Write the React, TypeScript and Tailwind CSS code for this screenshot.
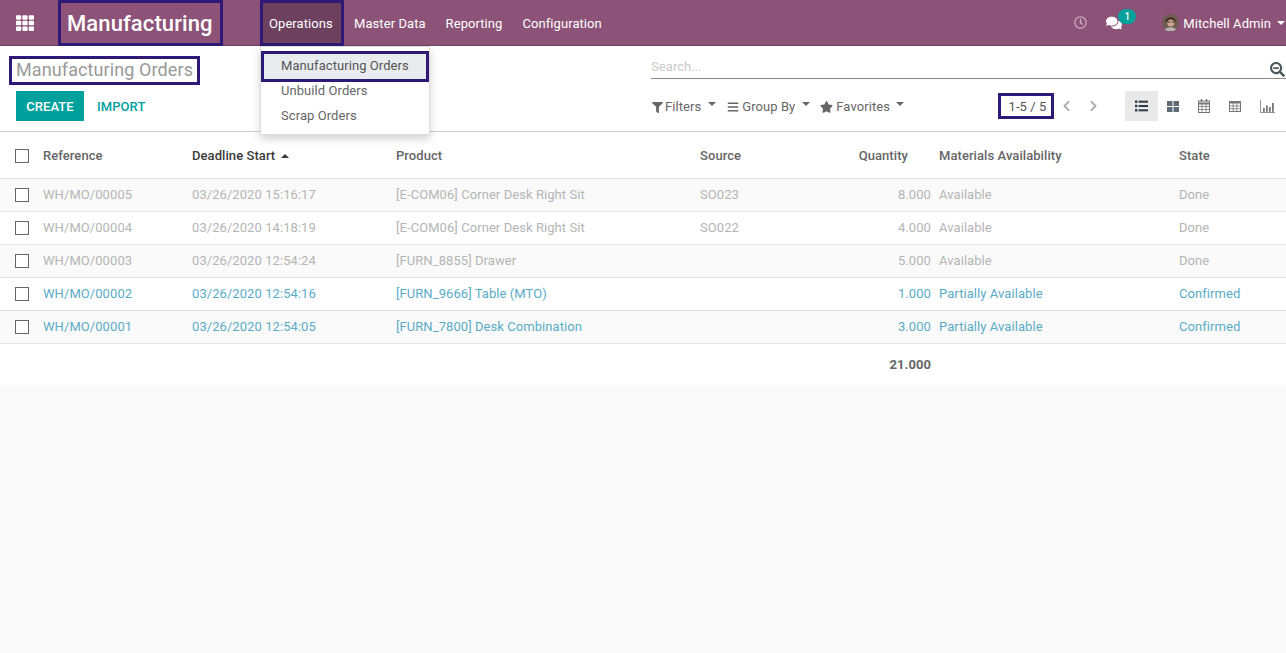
import React from 'react';
import { FaTh, FaFilter, FaBars, FaStar, FaComments, FaRegClock, FaSearchMinus, FaChevronLeft, FaChevronRight } from 'react-icons/fa';

const rowGrid = 'grid grid-cols-[43px_149px_204px_304px_239px_240px_1fr] items-center';

const orders = [
  { ref: 'WH/MO/00005', start: '03/26/2020 15:16:17', product: '[E-COM06] Corner Desk Right Sit', source: 'SO023', qty: '8.000', avail: 'Available', state: 'Done', done: true },
  { ref: 'WH/MO/00004', start: '03/26/2020 14:18:19', product: '[E-COM06] Corner Desk Right Sit', source: 'SO022', qty: '4.000', avail: 'Available', state: 'Done', done: true },
  { ref: 'WH/MO/00003', start: '03/26/2020 12:54:24', product: '[FURN_8855] Drawer', source: '', qty: '5.000', avail: 'Available', state: 'Done', done: true },
  { ref: 'WH/MO/00002', start: '03/26/2020 12:54:16', product: '[FURN_9666] Table (MTO)', source: '', qty: '1.000', avail: 'Partially Available', state: 'Confirmed', done: false },
  { ref: 'WH/MO/00001', start: '03/26/2020 12:54:05', product: '[FURN_7800] Desk Combination', source: '', qty: '3.000', avail: 'Partially Available', state: 'Confirmed', done: false },
];

function Checkbox() {
  return <span className="ml-[15px] block h-[14px] w-[14px] border border-[#666666] bg-white" />;
}

function Caret({ className = '' }: { className?: string }) {
  return <span className={`inline-block h-0 w-0 border-x-[4px] border-b-0 border-t-[4px] border-x-transparent border-t-current ${className}`} />;
}

function Avatar() {
  return (
    <svg viewBox="0 0 16 16" className="h-[17px] w-[17px]">
      <circle cx="8" cy="8" r="8" fill="#6f5b50" />
      <path d="M3 6 Q8 0 13 6 L12 8 Q8 4 4 8 Z" fill="#3d2e27" />
      <circle cx="8.3" cy="8.4" r="3.3" fill="#cfa78f" />
      <path d="M5.5 7.6h2.2M9 7.6h2.2" stroke="#3d2e27" strokeWidth="0.9" />
      <path d="M2.5 14 Q8 11 13.5 14 L11 16 L5 16 Z" fill="#b9b4ad" />
    </svg>
  );
}

function ListIcon() {
  return (
    <svg viewBox="0 0 13 12" className="h-[12px] w-[13px] text-[#2f3a44]" fill="currentColor">
      <rect x="0" y="0.5" width="2.4" height="2.4" />
      <rect x="0" y="4.8" width="2.4" height="2.4" />
      <rect x="0" y="9.1" width="2.4" height="2.4" />
      <rect x="3.6" y="0.7" width="9.4" height="2" />
      <rect x="3.6" y="5" width="9.4" height="2" />
      <rect x="3.6" y="9.3" width="9.4" height="2" />
    </svg>
  );
}

function KanbanIcon() {
  return (
    <svg viewBox="0 0 12 11" className="h-[11px] w-[12px] text-[#5f6b78]" fill="currentColor">
      <rect x="0" y="0" width="5.5" height="5" />
      <rect x="6.5" y="0" width="5.5" height="5" />
      <rect x="0" y="6" width="5.5" height="5" />
      <rect x="6.5" y="6" width="5.5" height="5" />
    </svg>
  );
}

function CalendarIcon() {
  return (
    <svg viewBox="0 0 12 14" className="h-[14px] w-[12px] text-[#777777]" fill="none" stroke="currentColor" strokeWidth="1">
      <rect x="0.5" y="2" width="11" height="11.5" />
      <path d="M0.5 4.5h11" strokeWidth="2" />
      <path d="M0.5 7.5h11M0.5 10.5h11M4 5v8.5M8 5v8.5" strokeWidth="0.8" />
      <path d="M3.5 0v3M8.5 0v3" strokeWidth="1.4" />
    </svg>
  );
}

function TableIcon() {
  return (
    <svg viewBox="0 0 12 11" className="h-[11px] w-[12px] text-[#777777]" fill="none" stroke="currentColor" strokeWidth="1">
      <rect x="0.5" y="0.5" width="11" height="10" />
      <path d="M0.5 1.5h11" strokeWidth="2" />
      <path d="M0.5 5h11M0.5 7.7h11M4.2 2v8.5M7.8 2v8.5" strokeWidth="0.8" />
    </svg>
  );
}

function GraphIcon() {
  return (
    <svg viewBox="0 0 15 13" className="h-[13px] w-[15px] text-[#777777]" fill="currentColor">
      <path d="M0.5 0v12.5H15" fill="none" stroke="currentColor" strokeWidth="0.8" />
      <rect x="3" y="8" width="1.8" height="3.8" />
      <rect x="6" y="5.5" width="1.8" height="6.3" />
      <rect x="9" y="7" width="1.8" height="4.8" />
      <rect x="12" y="3" width="1.8" height="8.8" />
    </svg>
  );
}

function NavBar() {
  return (
    <nav className="flex h-[46px] items-center border-b border-[#6f4560] bg-[#8c5277] text-[13px] text-white">
      <FaTh className="ml-4 h-[18px] w-[18px]" />
      <div className="ml-6 flex h-[46px] w-[165px] items-center border-[3px] border-[#2e1a76] pl-[6px] pt-[2px] text-[22px] font-medium tracking-[0.1px]">Manufacturing</div>
      <div className="ml-[37px] flex h-[46px] w-[84px] items-center border-[3px] border-[#2e1a76] bg-[#6d405d] pl-[6px] pt-[2px]">Operations</div>
      <span className="ml-[10px] pt-[2px]">Master Data</span>
      <span className="ml-[20px] pt-[2px]">Reporting</span>
      <span className="ml-[20px] pt-[2px]">Configuration</span>
      <div className="ml-auto flex items-center">
        <FaRegClock className="h-[13px] w-[13px] text-[#c9adc0]" />
        <div className="relative ml-[19px] mr-[40px]">
          <FaComments className="h-[16px] w-[16px]" />
          <span className="absolute left-[12px] top-[-6px] flex h-[15px] w-[18px] items-center justify-center rounded-full bg-[#00a09d] text-[10px] font-medium">1</span>
        </div>
        <Avatar />
        <span className="ml-[4px] pt-[2px]">Mitchell Admin</span>
        <Caret className="ml-[6px] mr-[1px]" />
      </div>
    </nav>
  );
}

function ControlPanel() {
  return (
    <div className="flex h-[86px] border-b border-[#cccccc] bg-white text-[13px] text-[#666666]">
      <div className="flex w-[640px] flex-col pl-[9px] pt-[10px]">
        <div className="flex h-[29px] w-[191px] items-center border-[3px] border-[#2e1a76] pb-[2px] pl-1 text-[18px] tracking-[0.1px] text-[#999999]">Manufacturing Orders</div>
        <div className="ml-[7px] mt-[6px] flex items-center">
          <button className="h-[30px] w-[68px] bg-[#00a09d] pt-[2px] text-[13px] font-medium text-white">CREATE</button>
          <span className="ml-[13px] pt-[2px] text-[13px] font-medium text-[#00a09d]">IMPORT</span>
        </div>
      </div>
      <div className="ml-[11px] flex flex-1 flex-col">
        <div className="mt-[12px] flex h-[21px] items-center justify-between border-b border-[#888888]">
          <span className="pb-[2px] text-[13px] text-[#c9c9c9]">Search...</span>
          <FaSearchMinus className="mr-[1px] mt-[2px] h-[15px] w-[15px] text-[#4c5a5c]" />
        </div>
        <div className="mt-[12px] flex items-center">
          <FaFilter className="ml-[1px] mt-[2px] h-[11px] w-[11px]" />
          <span className="ml-[2px] pt-[2px]">Filters</span>
          <Caret className="ml-[7px] -translate-y-[2px]" />
          <FaBars className="ml-[11px] mt-[2px] h-[12px] w-[12px]" />
          <span className="ml-[3px] pt-[2px]">Group By</span>
          <Caret className="ml-[7px] -translate-y-[2px]" />
          <FaStar className="ml-[10px] mt-[2px] h-[12px] w-[13px]" />
          <span className="ml-[3px] pt-[2px]">Favorites</span>
          <Caret className="ml-[6px] -translate-y-[2px]" />
          <div className="ml-[94px] flex h-[26px] w-[56px] items-center justify-center border-[3px] border-[#2e1a76] pl-[3px] pt-[1px] text-[13px] text-[#555555]">1-5 / 5</div>
          <FaChevronLeft className="ml-[8px] h-[12px] w-[9px] text-[#aaaaaa]" />
          <FaChevronRight className="ml-[18px] h-[12px] w-[9px] text-[#aaaaaa]" />
          <div className="ml-[27px] flex h-[30px] w-[33px] items-center justify-center bg-[#e9e9e9]">
            <ListIcon />
          </div>
          <div className="ml-[9px]"><KanbanIcon /></div>
          <div className="ml-[19px]"><CalendarIcon /></div>
          <div className="ml-[19px]"><TableIcon /></div>
          <div className="ml-[19px]"><GraphIcon /></div>
        </div>
      </div>
    </div>
  );
}

function OperationsMenu() {
  return (
    <div className="absolute left-[260px] top-[46px] h-[89px] w-[170px] border border-[#dddddd] bg-white pt-[4px] text-[13px] text-[#666666] shadow-[0_4px_8px_rgba(0,0,0,0.18)]">
      <div className="flex h-[31px] items-center border-[3px] border-[#2e1a76] bg-[#e9ecef] pb-[2px] pl-[17px] text-[#555555]">Manufacturing Orders</div>
      <div className="-mt-[4px] flex h-[25px] items-center pl-[20px]">Unbuild Orders</div>
      <div className="flex h-[25px] items-center pl-[20px]">Scrap Orders</div>
    </div>
  );
}

function OrdersTable() {
  return (
    <div className="bg-white text-[13px]">
      <div className={`${rowGrid} h-[47px] border-b border-[#dee2e6] pt-[1px] font-medium text-[#666666] shadow-[0_1px_2px_rgba(0,0,0,0.08)]`}>
        <Checkbox />
        <span>Reference</span>
        <span className="text-[#3a3a3a]">
          Deadline Start
          <span className="ml-[6px] inline-block h-0 w-0 -translate-y-[2px] border-x-[4px] border-b-[4px] border-t-0 border-x-transparent border-b-[#3a3a3a]" />
        </span>
        <span>Product</span>
        <div className="flex justify-between pr-[31px]">
          <span>Source</span>
          <span>Quantity</span>
        </div>
        <span>Materials Availability</span>
        <span>State</span>
      </div>
      {orders.map((o, i) => (
        <div
          key={o.ref}
          className={`${rowGrid} h-[33px] border-b border-[#dee2e6] ${i % 2 === 0 ? 'bg-[#fafafa]' : 'bg-white'} ${o.done ? 'text-[#b5b5b5]' : 'text-[#5aacc6]'}`}
        >
          <Checkbox />
          <span>{o.ref}</span>
          <span>{o.start}</span>
          <span>{o.product}</span>
          <div className="flex justify-between pr-[8px]">
            <span>{o.source}</span>
            <span>{o.qty}</span>
          </div>
          <span>{o.avail}</span>
          <span>{o.state}</span>
        </div>
      ))}
      <div className={`${rowGrid} h-[41px] font-bold text-[#666666]`}>
        <span />
        <span />
        <span />
        <span />
        <span className="pr-[8px] text-right">21.000</span>
      </div>
    </div>
  );
}

export default function App() {
  return (
    <div className="relative h-[653px] overflow-hidden bg-[#f9f9f9] font-['Roboto',sans-serif] tracking-[0.07px]">
      <NavBar />
      <ControlPanel />
      <OrdersTable />
      <OperationsMenu />
    </div>
  );
}
